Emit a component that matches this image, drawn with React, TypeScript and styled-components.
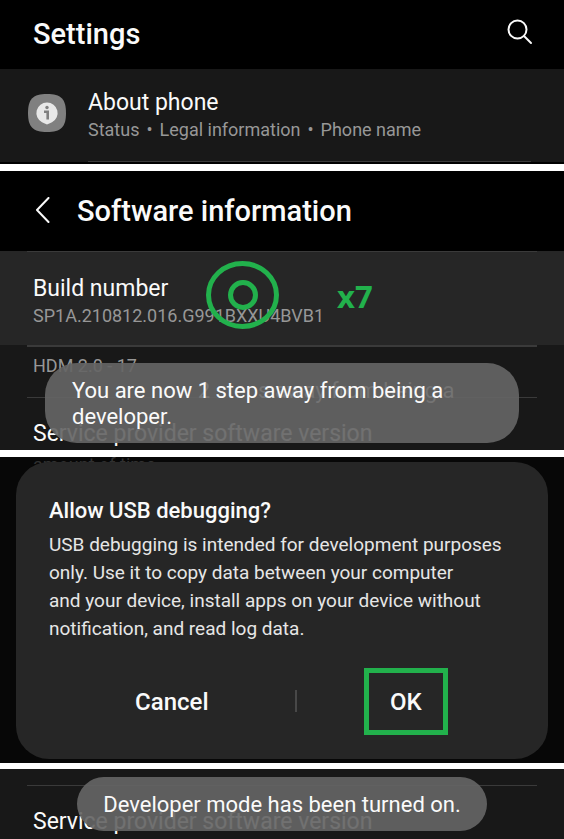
import React from "react";
import styled, { createGlobalStyle } from "styled-components";

const GREEN = "#22b14c";

const GlobalStyle = createGlobalStyle`
  *, *::before, *::after { box-sizing: border-box; }
  body {
    margin: 0;
    background: #ffffff;
    color: #fafafa;
    font-family: Roboto, "Liberation Sans", sans-serif;
  }
  h1, h2, p { margin: 0; }
  button { font: inherit; color: inherit; background: none; border: 0; padding: 0; cursor: pointer; }
`;

const Page = styled.main`
  display: flex;
  flex-direction: column;
  gap: 7px;
`;

const Panel = styled.section<{ $tone?: string }>`
  position: relative;
  overflow: hidden;
  background: ${(p) => p.$tone ?? "#181818"};
`;

const Header = styled.header<{ $tall?: boolean }>`
  display: flex;
  align-items: center;
  gap: 24px;
  height: ${(p) => (p.$tall ? 80 : 69)}px;
  padding: ${(p) => (p.$tall ? "0 31px 0 33px" : "0 31px 2px 33px")};
  background: #000000;
`;

const Title = styled.h1`
  flex: 1;
  font-size: 29px;
  line-height: 36px;
  font-weight: 500;
`;

const IconButton = styled.button<{ $raised?: boolean }>`
  display: flex;
  padding-bottom: ${(p) => (p.$raised ? 4 : 2)}px;
`;

const AboutRow = styled.div`
  display: flex;
  align-items: center;
  padding-left: 28px;
  border-bottom: 2px solid #000000;
`;

const AppIcon = styled.svg`
  margin-bottom: 6px;
`;

const AboutBody = styled.div`
  flex: 1;
  margin: 0 33px 0 22px;
  padding: 18px 0;
  border-bottom: 1px solid #3a3a3a;
`;

const RowTitle = styled.p`
  padding-top: 2px;
  font-size: 23px;
  line-height: 28px;
  white-space: nowrap;
`;

const RowNote = styled.p`
  display: flex;
  gap: 7px;
  font-size: 18px;
  line-height: 26px;
  color: #979797;
  white-space: nowrap;
`;

const BuildRow = styled.div`
  position: relative;
  background: #262626;
  height: 93px;
  padding: 21px 33px 0;
`;

const Divider = styled.hr<{ $thick?: boolean }>`
  height: ${(p) => (p.$thick ? 2 : 1)}px;
  margin: 0 27px;
  border: 0;
  background: #3a3a3a;
`;

const BuildTop = styled.div`
  background: #262626;
`;

const Rings = styled.svg`
  position: absolute;
  left: 206px;
  top: 9px;
`;

const TapCount = styled.strong`
  position: absolute;
  left: 337px;
  top: 24px;
  font: 700 31px/40px "Open Sans", "Noto Sans", sans-serif;
  color: ${GREEN};
`;

const HdmRow = styled.div`
  padding: 6px 33px 18px;
`;

const ProviderRow = styled.div`
  height: 52px;
  padding: 20px 33px 0;
`;

const Toast = styled.div<{ $wide?: boolean }>`
  position: absolute;
  left: ${(p) => (p.$wide ? 45 : 77)}px;
  right: ${(p) => (p.$wide ? 45 : 77)}px;
  bottom: ${(p) => (p.$wide ? 7 : 8)}px;
  padding: ${(p) => (p.$wide ? "15px 27px 13px" : "15px 20px 13px")};
  border-radius: ${(p) => (p.$wide ? 32 : 27)}px;
  background: rgba(101, 101, 101, 0.92);
  font-size: 22px;
  line-height: 26px;
  text-align: ${(p) => (p.$wide ? "left" : "center")};
`;

const FadingText = styled.span`
  position: absolute;
  left: 27px;
  color: #747474;
  white-space: nowrap;
`;

const ToastText = styled.p`
  position: relative;
`;

const DialogPanel = styled(Panel)`
  padding: 5px 16px 4px;
`;

const Backdrop = styled.p`
  position: absolute;
  left: 33px;
  top: -4px;
  font-size: 18px;
  line-height: 24px;
  color: #303030;
`;

const Dialog = styled.div`
  position: relative;
  padding: 33px 33px 24px;
  border-radius: 33px;
  background: #262626;
`;

const DialogTitle = styled.h2`
  font-size: 22px;
  line-height: 32px;
  font-weight: 500;
`;

const DialogText = styled.p`
  margin-top: 4px;
  font-size: 19px;
  line-height: 28px;
  color: #e6e6e6;
`;

const Actions = styled.div`
  display: flex;
  align-items: center;
  margin-top: 25px;
`;

const Slot = styled.div<{ $grow: number }>`
  flex: ${(p) => p.$grow} 1 0;
  display: flex;
  justify-content: center;
`;

const Separator = styled.span`
  width: 2px;
  height: 22px;
  margin-bottom: 2px;
  background: #484848;
`;

const Action = styled.button<{ $marked?: boolean }>`
  width: 84px;
  height: 67px;
  border: ${(p) => (p.$marked ? `5px solid ${GREEN}` : "0")};
  font-size: 24px;
  line-height: 30px;
  font-weight: 500;
`;

const LastPanel = styled(Panel)`
  margin-top: -1px;
  padding: 16px 0 1px;
`;

function Provider() {
  return (
    <>
      <Divider />
      <ProviderRow>
        <RowTitle>Service provider software version</RowTitle>
      </ProviderRow>
    </>
  );
}

export default function App() {
  return (
    <>
      <GlobalStyle />
      <Page>
        <Panel>
          <Header>
            <Title>Settings</Title>
            <IconButton $raised aria-label="Search">
              <svg width="26" height="26" viewBox="0 0 26 26" fill="none" stroke="#fafafa" strokeWidth="2" strokeLinecap="round">
                <circle cx="10.5" cy="10.5" r="9" />
                <path d="M17 17l7 7" />
              </svg>
            </IconButton>
          </Header>
          <AboutRow>
            <AppIcon width="38" height="38" viewBox="0 0 38 38" aria-hidden="true">
              <path d="M19 0C33 0 38 5 38 19S33 38 19 38 0 33 0 19 5 0 19 0Z" fill="#808080" />
              <path d="M19 8.5a10.5 10.5 0 0 1 5 19.8Q21 29.5 19 30.5Q17 29.5 14 28.3A10.5 10.5 0 0 1 19 8.5Z" fill="#e8e8e8" />
              <circle cx="19" cy="13.5" r="1.7" fill="#808080" />
              <path d="M16 17.7h3.7v7.8" fill="none" stroke="#808080" strokeWidth="2.6" />
            </AppIcon>
            <AboutBody>
              <RowTitle>About phone</RowTitle>
              <RowNote>
                <span>Status</span>
                <span>•</span>
                <span>Legal information</span>
                <span>•</span>
                <span>Phone name</span>
              </RowNote>
            </AboutBody>
          </AboutRow>
        </Panel>

        <Panel>
          <Header $tall>
            <IconButton aria-label="Back">
              <svg width="20" height="26" viewBox="0 0 20 26" fill="none" stroke="#fafafa" strokeWidth="2" strokeLinecap="round" strokeLinejoin="round">
                <path d="M15.5 1L4 13l11.5 12" />
              </svg>
            </IconButton>
            <Title>Software information</Title>
          </Header>
          <BuildTop>
            <Divider />
          </BuildTop>
          <BuildRow>
            <RowTitle>Build number</RowTitle>
            <RowNote>SP1A.210812.016.G991BXXU4BVB1</RowNote>
            <Rings width="73" height="68" viewBox="0 0 73 68" fill="none" stroke={GREEN} strokeWidth="5" aria-hidden="true">
              <ellipse cx="36.5" cy="34" rx="34" ry="31.5" />
              <circle cx="37" cy="34" r="12.5" />
            </Rings>
            <TapCount>x7</TapCount>
          </BuildRow>
          <Divider $thick />
          <HdmRow>
            <RowNote>HDM 2.0 - 17</RowNote>
          </HdmRow>
          <Provider />
          <Toast $wide role="status">
            <FadingText aria-hidden="true">You are now 2 steps away from being a</FadingText>
            <ToastText>You are now 1 step away from being a developer.</ToastText>
          </Toast>
        </Panel>

        <DialogPanel $tone="#070707">
          <Backdrop>amount of time.</Backdrop>
          <Dialog role="dialog" aria-labelledby="usb-title">
            <DialogTitle id="usb-title">Allow USB debugging?</DialogTitle>
            <DialogText>
              USB debugging is intended for development purposes only. Use it to copy data between your computer
              <br />
              and your device, install apps on your device without notification, and read log data.
            </DialogText>
            <Actions>
              <Slot $grow={9}>
                <Action>Cancel</Action>
              </Slot>
              <Separator />
              <Slot $grow={8}>
                <Action $marked>OK</Action>
              </Slot>
            </Actions>
          </Dialog>
        </DialogPanel>

        <LastPanel>
          <Provider />
          <Toast role="status">
            <ToastText>Developer mode has been turned on.</ToastText>
          </Toast>
        </LastPanel>
      </Page>
    </>
  );
}
